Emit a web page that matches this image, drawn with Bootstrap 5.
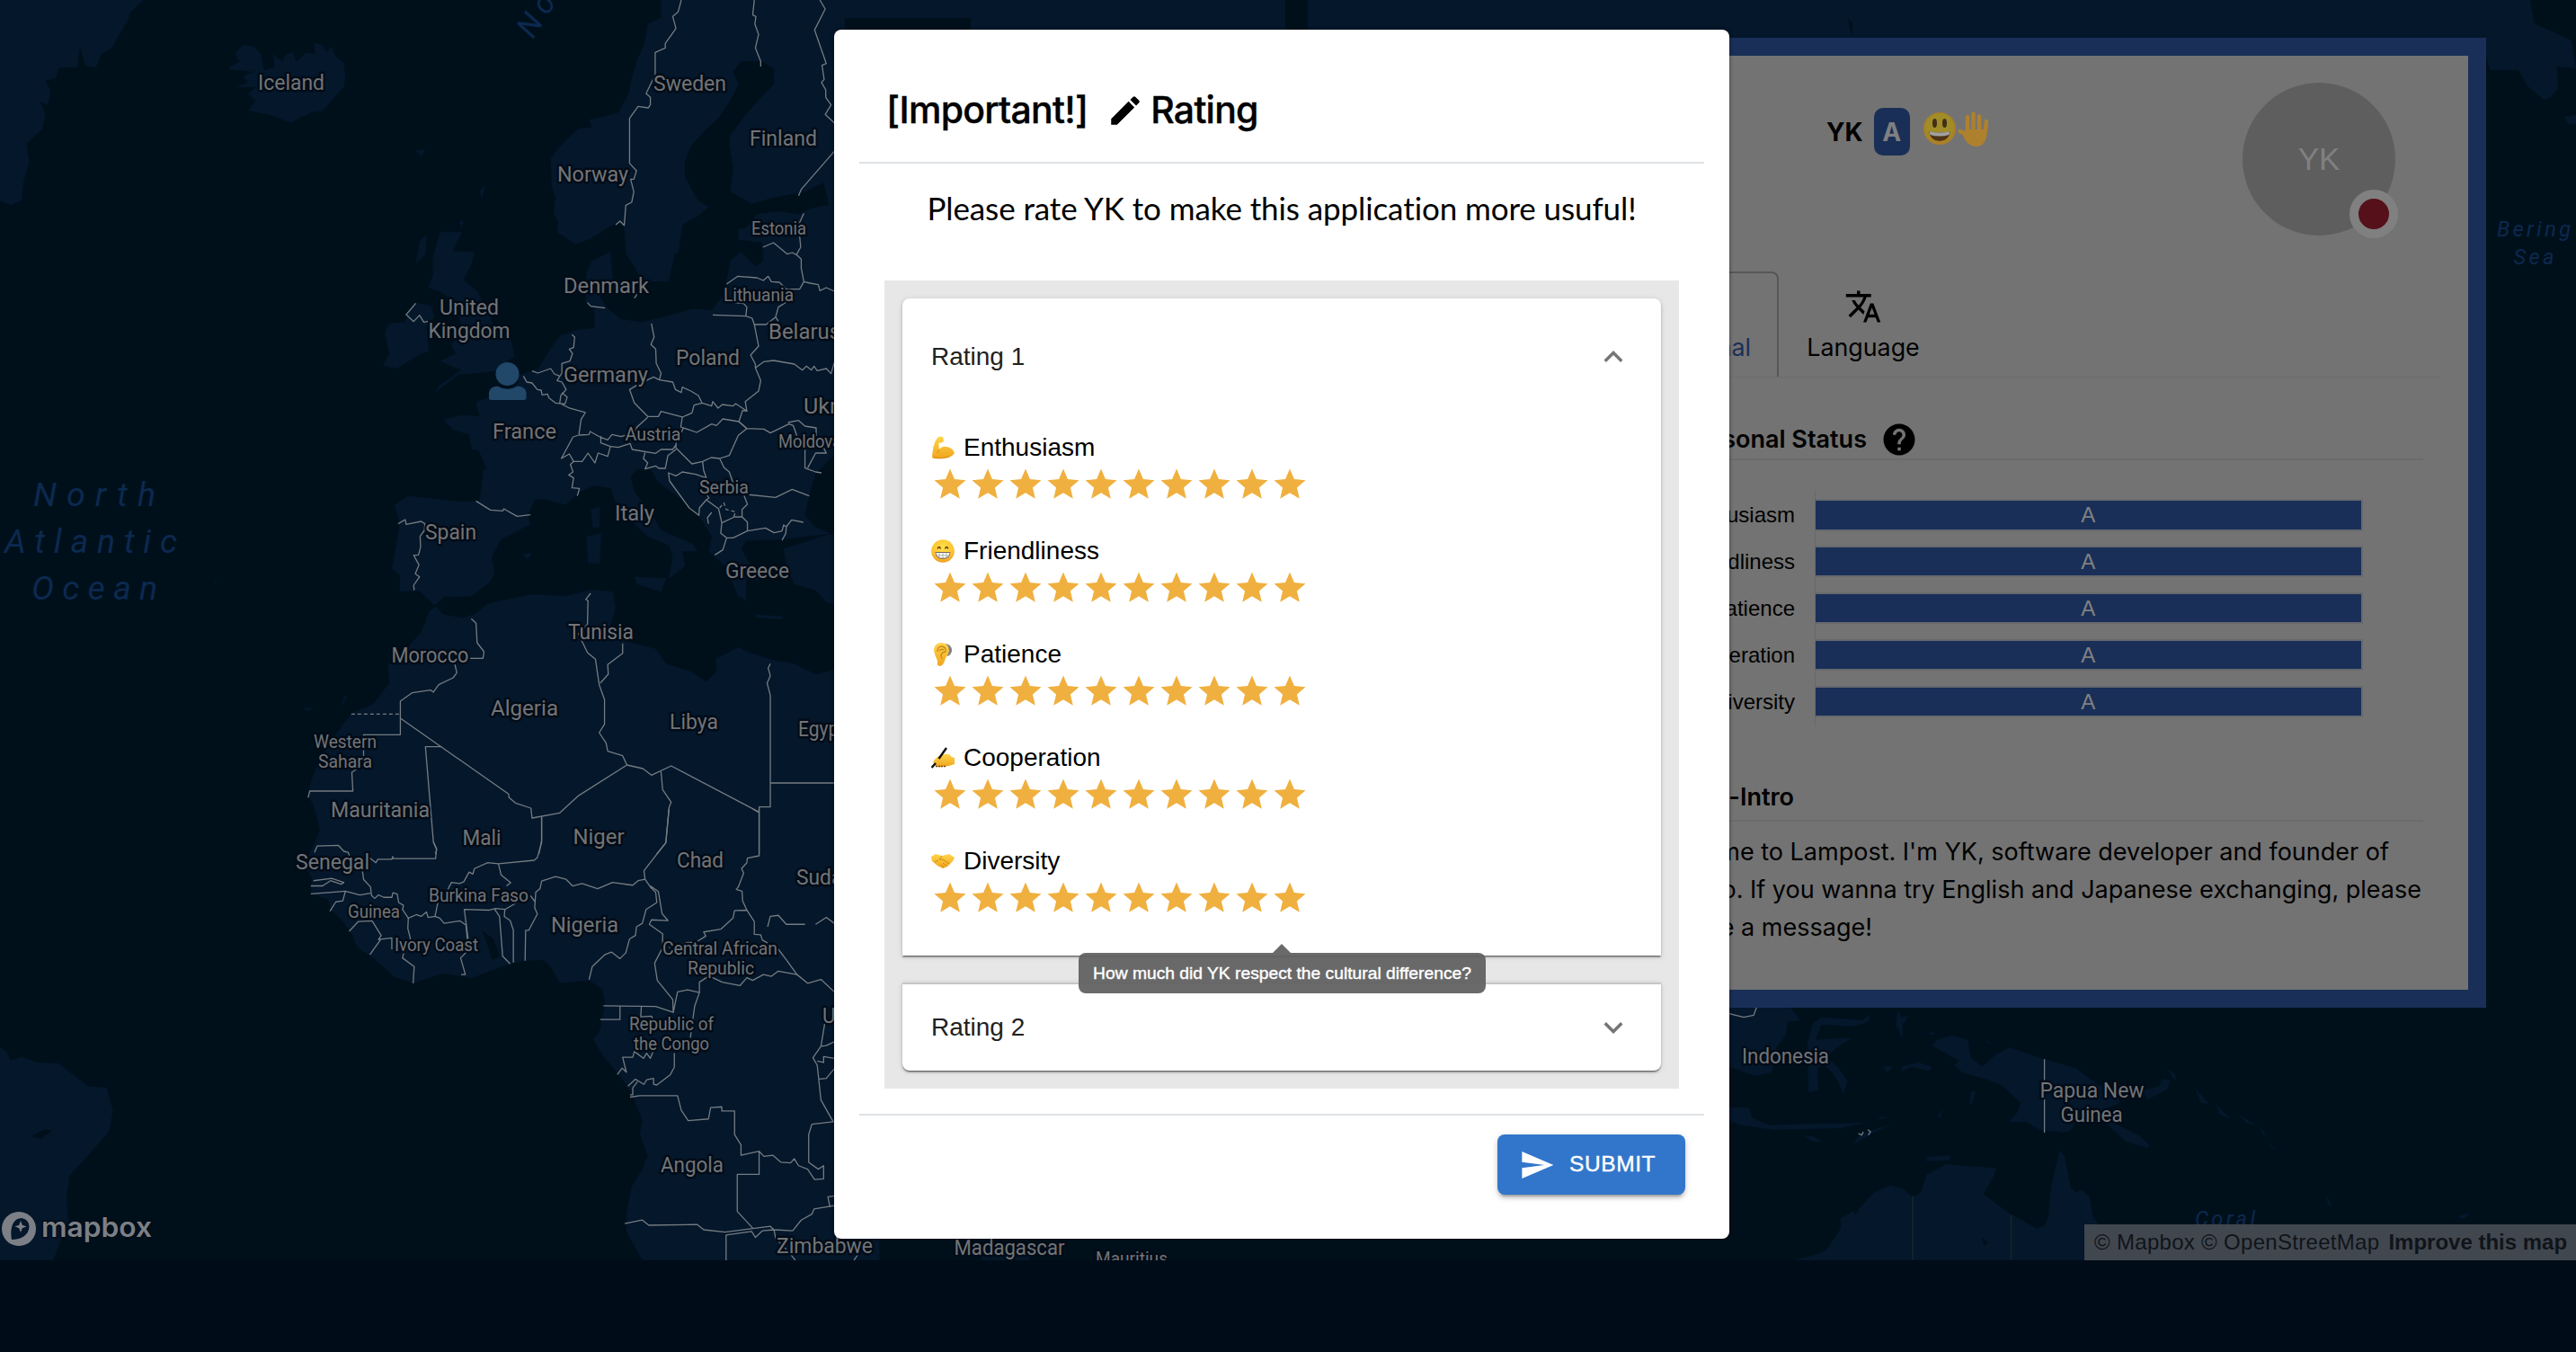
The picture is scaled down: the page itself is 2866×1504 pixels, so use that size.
<!DOCTYPE html>
<html lang="en">
<head>
<meta charset="utf-8">
<title>Lampost</title>
<link href="https://cdn.jsdelivr.net/npm/bootstrap@5.3.0/dist/css/bootstrap.min.css" rel="stylesheet">
<style>
body{background:#000c18;font-family:"Liberation Sans",Arial,sans-serif;font-size:28px;color:#000;width:2866px;height:1504px;overflow:hidden;position:relative}
svg{display:block;flex:none}
.world{height:1402px;background:#00101b;position:relative;overflow:hidden}
.world>svg.atlas{width:2866px;height:1402px}
.land{fill:#04172b}
.sea{fill:#00101b}
.border-lines path{fill:none;stroke:#757c82;stroke-width:1.3;vector-effect:non-scaling-stroke;stroke-linejoin:round}
.places text{font-family:Roboto,sans-serif;fill:#737476;stroke:#020c18;stroke-width:5px;paint-order:stroke;stroke-linejoin:round;text-anchor:middle;font-size:24px}
.places .minor{font-size:20.5px}
.waters text{font-family:Roboto,sans-serif;font-style:italic;fill:#0c2950;text-anchor:middle}
.credits{position:absolute;right:0;bottom:0;width:547px;height:40px;background:#41474f;color:#10141a;font-size:24px;line-height:40px;white-space:nowrap}
.profile{position:absolute;left:1700px;top:42px;width:1066px;height:1079px;border:20px solid #192f58;background:#737373;font-family:Inter,sans-serif;padding:0 30px 0 70px}
.grade{background:#192f58;color:#808080;width:40px;height:53px;border-radius:10px;font-weight:700}
.avatar{width:170px;height:170px;background:#5e5e5e;color:#808080;font-family:"Liberation Sans",sans-serif;font-size:35px}
.flagpin{position:absolute;right:-3px;bottom:-3px;width:54px;height:54px;border:10px solid #808080;background:#56101a;box-sizing:border-box}
.tabbar{height:118px;border-bottom:1.5px solid #6d6d6d;font-size:26.8px}
.tab-on{border:2px solid #575757;border-bottom:0;border-radius:8px 8px 0 0;color:#192f58}
.rule{border-bottom:2px solid #6c6c6c}
.chart{font-family:"Liberation Sans",sans-serif;font-size:24px;line-height:30px}
.axis{border-left:1.5px solid #696969;height:262px;padding-top:9px}
.bar{height:35.5px;margin-bottom:16.4px;background:#192f58;border:2px solid #67696d;border-left:0;color:#808080;text-align:center;line-height:32px;width:608.5px}
.barlabel{height:51.9px;line-height:35px;text-align:right}
.intro{margin-top:13px;line-height:42px;font-size:27px}
.dialogbox{position:absolute;left:928px;top:33px;width:996px;height:1345px;border-radius:8px;background:#fff;padding:0 28px;box-shadow:0 0 4px rgba(0,0,0,.5)}
.dlg-head{height:149px;border-bottom:2px solid #dee2e6;padding:64px 0 0 30px;font-family:Inter,sans-serif;font-weight:500;font-size:41px;line-height:50px;letter-spacing:-.75px;-webkit-text-stroke:.4px #000}
.dlg-lead{height:130px;font-family:Lato,sans-serif;font-size:35px;line-height:42px;letter-spacing:-.1px;padding-top:28px;text-align:center;white-space:nowrap}
.graybox{margin:0 28px;background:#e7e7e7;padding:20px}
.panel-a,.panel-b{background:#fff;box-shadow:0 2px 1px -1px rgba(0,0,0,.35),0 2px 2px rgba(0,0,0,.28),0 1px 6px rgba(0,0,0,.14);padding:0 32px}
.panel-a{height:731px;border-radius:8px 8px 0 0;margin-bottom:30px}
.panel-b{height:98px;border-radius:0 0 8px 8px;border-top:2px solid #c6c6c6}
.sum{color:#212121}
.crit{height:115px;line-height:42px}
.crit>svg{margin-top:-1px}
.crit .emo{width:26px;height:26px;margin-right:10px}
.tip{position:absolute;left:1200px;top:1060px;width:453px;height:44.5px;border-radius:8px;background:rgba(97,97,97,.94);color:#fff;font-size:19.25px;line-height:45px;text-align:center;white-space:nowrap;-webkit-text-stroke:.4px #fff}
.tip:before{content:"";position:absolute;left:216px;top:-10px;border:10px solid transparent;border-top:0;border-bottom-color:rgba(97,97,97,.94)}
.dlg-foot{margin-top:28px;border-top:2px solid #dee2e6;padding:21px 21px 0 0}
.submit{width:209px;height:67px;border-radius:8px;background:#3276cb;color:#fff;font-size:24.5px;letter-spacing:.6px;-webkit-text-stroke:.4px #fff;box-shadow:0 6px 2px -4px rgba(0,0,0,.2),0 4px 4px rgba(0,0,0,.14),0 2px 10px rgba(0,0,0,.12)}
</style>
<script src="https://cdn.jsdelivr.net/npm/bootstrap@5.3.0/dist/js/bootstrap.bundle.min.js"></script>
</head>
<body>
<svg width="0" height="0" class="position-absolute">
<defs>
<path id="star" d="M12 17.27 18.18 21l-1.64-7.03L22 9.24l-7.19-.61L12 2 9.19 8.63 2 9.24l5.46 4.73L5.82 21z"/>
<g id="stars" fill="#f0b03f"><use href="#star"/><use href="#star" x="24"/><use href="#star" x="48"/><use href="#star" x="72"/><use href="#star" x="96"/><use href="#star" x="120"/><use href="#star" x="144"/><use href="#star" x="168"/><use href="#star" x="192"/><use href="#star" x="216"/></g>
<radialGradient id="skin" cx=".5" cy=".35" r=".7"><stop offset="0" stop-color="#ffe04a"/><stop offset=".65" stop-color="#fdc431"/><stop offset="1" stop-color="#ee8f1c"/></radialGradient>
<linearGradient id="tan" x1="0" y1="0" x2="0" y2="1"><stop offset="0" stop-color="#ffd54a"/><stop offset="1" stop-color="#f0a41e"/></linearGradient>
</defs>
</svg>

<main class="world">
<svg class="atlas" viewBox="0 0 2866 1402">
<g class="land">
<g transform="scale(.5931,.33333)">
<path d="M0 0L270 0 245 40 240 70 222 120 210 160 190 180 180 225 160 220 150 160 145 225 110 225 105 260 85 270 95 300 90 350 75 340 85 380 80 430 50 480 55 540 45 600 40 670 20 685 0 670Z"/>
<path d="M430 225L450 205 440 180 455 150 475 155 490 180 495 235 515 225 512 180 530 205 537 180 550 175 556 205 575 175 590 180 590 142 605 150 612 175 622 155 630 190 645 210 648 260 645 290 620 340 605 370 585 375 545 410 510 385 465 370 480 335 465 315 480 290 440 292 465 275 455 255 475 240 430 232Z"/>
<path d="M1240 0L1240 60 1215 80 1210 140 1195 200 1185 260 1180 310 1160 375 1130 390 1105 400 1110 425 1085 430 1060 470 1045 500 1033 530 1035 620 1042 660 1038 710 1047 740 1045 775 1080 815 1110 795 1140 760 1158 745 1170 755 1175 850 1190 890 1205 940 1255 940 1265 850 1273 840 1280 750 1310 720 1330 690 1310 670 1300 640 1285 590 1285 540 1295 490 1320 440 1350 390 1375 320 1385 280 1375 240 1390 205 1430 205 1452 230 1452 280 1430 320 1400 380 1370 450 1368 480 1375 560 1370 640 1410 680 1450 660 1510 640 1545 610 1555 685 1520 695 1500 715 1460 705 1420 715 1400 760 1385 765 1385 800 1430 810 1432 870 1418 890 1390 840 1370 870 1362 950 1355 990 1335 1035 1300 1030 1240 1060 1205 1075 1165 1065 1140 1030 1125 990 1150 940 1145 840 1110 870 1100 910 1098 1010 1115 1030 1115 1095 1085 1100 1050 1120 1030 1170 1010 1230 960 1260 975 1275 945 1310 893 1340 900 1390 870 1385 835 1400 850 1435 880 1450 885 1500 1600 1500 1600 0Z"/>
<path d="M825 775L867 775 855 815 850 838 890 840 885 880 870 935 895 970 920 1060 925 1090 960 1140 965 1190 945 1215 945 1235 900 1245 860 1250 815 1312 825 1285 865 1235 825 1205 855 1180 845 1150 870 1110 850 1000 820 970 803 960 812 920 812 860Z"/>
<path d="M775 1010L808 1020 815 1060 800 1090 805 1170 780 1190 745 1230 718 1220 730 1180 722 1110 730 1080 760 1075 765 1050ZM788 800L800 785 798 850 780 880ZM780 500L798 500 790 525ZM900 635L912 615 903 662ZM862 740L870 735 866 765Z"/>
</g>
<g transform="translate(0,450) scale(.5931,.33333)">
<path d="M893 0L900 40 870 35 832 50 850 85 880 95 890 130 905 180 914 220 907 215 900 320 870 325 765 305 740 335 750 400 735 550 750 570 750 625 785 620 815 670 835 642 885 640 920 590 928 560 922 510 940 450 995 400 990 365 1005 315 1025 318 1060 335 1090 290 1115 270 1145 280 1155 330 1185 390 1215 440 1255 470 1262 510 1255 580 1285 540 1280 490 1308 490 1300 465 1240 420 1225 370 1190 290 1183 240 1195 215 1222 220 1235 260 1290 330 1310 370 1335 440 1330 490 1360 540 1385 640 1400 655 1400 580 1425 590 1390 480 1400 455 1470 450 1510 440 1560 432 1530 410 1510 370 1520 290 1530 230 1565 170 1600 150 1600 0Z"/>
<path d="M1470 480L1500 465 1550 435 1600 430 1600 680 1550 660 1530 620 1490 600 1475 540Z"/>
<path d="M1108 350L1125 340 1125 410 1112 410ZM1100 440L1128 430 1125 530 1103 530ZM1190 575L1250 580 1240 625 1195 600ZM1415 700L1470 708 1465 718 1420 712ZM980 500L998 495 990 518ZM645 975L652 972 640 1010ZM570 1010L590 1015 575 1022ZM400 588L410 590 404 594Z"/>
<path d="M818 672L830 700 868 712 890 700 915 665 950 650 1000 633 1060 640 1110 618 1150 625 1155 680 1145 740 1175 790 1230 815 1250 865 1295 890 1325 925 1345 890 1342 850 1385 810 1410 830 1455 855 1490 865 1530 900 1600 870 1600 1500 598 1500 600 1420 590 1350 578 1300 585 1250 600 1180 630 1100 660 1030 700 1000 730 930 728 870 770 800 790 760 805 690Z"/>
</g>
<g transform="translate(0,900) scale(.5931,.3852)">
<path d="M595 0L600 60 590 100 570 155 585 200 583 245 615 260 620 290 640 320 660 360 670 400 700 430 740 485 775 503 830 475 885 488 955 448 985 438 1020 436 1035 460 1050 503 1105 495 1130 520 1135 560 1125 640 1112 665 1130 710 1160 765 1185 820 1205 900 1200 940 1215 1000 1205 1040 1185 1090 1175 1170 1175 1220 1205 1303 1650 1303 1650 1245 1690 1180 1690 0Z"/>
<path d="M0 688L12 700 20 725 40 715 70 732 110 735 165 800 200 805 212 870 205 930 160 1010 130 1060 125 1120 128 1190 100 1303 0 1303Z"/>
</g>
<path d="M928 0H2815L2824 50 2750 60H928ZM1092 1402L1092 1396H1145L1145 1402Z"/>
<path d="M2766 60L2760 35 2806 20 2815 24 2824 28 2861 45 2866 76 2845 74 2846 99 2838 108 2830 111 2812 96 2802 78 2770 78ZM2852 130L2866 128 2866 138 2858 138Z"/>
<g transform="translate(1900,1060) scale(.6161,.33333)">
<path d="M39 183L150 183 168 225 145 230 140 280 125 310 115 400 85 410 39 380Z"/>
<path d="M190 235L205 215 280 225 293 203 290 230 265 245 205 240 195 290 235 285 260 285 230 320 215 350 235 380 253 430 245 470 235 430 225 400 210 370 198 385 200 460 182 465 180 300Z"/>
<path d="M343 190L350 215 362 210 352 240 352 285 340 240ZM398 265L412 268 405 275ZM315 380L335 378 325 398ZM350 380L380 365 405 380 400 395 370 380 350 395ZM475 465L484 460 478 505 472 500ZM415 545L425 520 420 550ZM500 290L512 300 508 305Z"/>
<path d="M405 310L415 290 440 275 470 290 475 350 495 380 520 340 545 315 600 350 665 385 705 440 735 460 745 500 720 520 735 570 780 610 797 640 795 652 755 630 720 570 690 530 665 560 655 595 640 600 600 590 575 565 543 565 560 530 565 500 530 440 500 420 460 400 445 375 455 360 430 335Z"/>
<path d="M155 1025L190 1010 215 990 240 920 240 885 265 860 265 875 280 840 300 800 330 775 355 790 370 815 385 800 395 740 430 705 460 710 500 715 522 720 515 750 498 805 545 870 595 920 608 910 615 880 620 780 635 660 645 680 655 780 665 800 675 790 690 815 695 880 720 940 765 1025Z"/>
<path d="M39 515L75 515 80 550 110 575 190 570 245 570 290 565 240 585 180 588 120 590 60 575 39 560ZM172 610L190 612 208 632 190 630ZM262 640L275 605 335 570 300 600ZM305 550L325 545 315 555ZM785 460L815 445 820 420 835 425 830 455 795 490ZM793 350L845 405 845 430 830 390ZM880 450L905 505 890 500ZM918 508L945 555 925 540ZM958 540L990 575 975 570ZM995 575L1012 615 1003 605ZM1012 635L1028 655 1018 652ZM1117 810L1128 845 1120 840ZM1130 850L1140 872ZM1355 880L1378 865 1365 890ZM395 682L440 675 435 692 395 695Z"/>
</g>
</g>
<g class="sea"><path d="M940 20H1080V33H940ZM1430 0H1455V33H1430ZM2056 20L2061 26 2060 41Z"/>
<path d="M2204 1376L2212 1382 2208 1386ZM35 1264L50 1256 58 1258 45 1267ZM537 1036L549 1044 556 1064 548 1068Z"/></g>

<g class="border-lines">
<g transform="scale(.5931,.33333)">
<path d="M1278 0L1272 40 1262 55 1268 95 1248 145 1248 160 1229 175 1229 250 1212 312 1220 325 1220 350 1216 360 1197 355 1181 395 1181 545 1194 570 1189 598 1183 598 1189 640 1185 675 1174 685 1171 752 1163 738 1155 750M1415 0L1412 50 1418 55 1416 80 1423 115 1417 160 1427 205 1427 222M1538 0L1548 30 1528 100 1550 212 1542 218 1546 265 1541 275 1549 300 1549 325 1559 350 1548 382 1565 410M1565 505L1503 632 1498 653"/>
<path d="M1508 712L1498 750 1502 825 1494 850 1503 865 1503 895 1508 940 1520 945 1535 950 1538 970 1550 960 1565 972M1431 825L1451 810 1477 848 1486 843 1494 850M1363 948L1384 922 1420 927 1432 936 1441 922 1447 940 1462 942 1475 965 1500 965 1508 940M1378 1010L1395 1013 1401 1025 1399 1055M1337 1051L1399 1055 1411 1062 1415 1083 1437 1083 1455 1058 1460 1072M1455 1058L1460 1025 1478 1005"/>
<path d="M1415 1083L1423 1155 1408 1185 1417 1215 1417 1228 1427 1270 1423 1305 1398 1340 1401 1372M1417 1228L1433 1207 1451 1203 1490 1215 1505 1235 1513 1222 1522 1235 1527 1222 1533 1237 1550 1230 1559 1247 1565 1210"/>
<path d="M1222 1080L1227 1125 1221 1150 1230 1165 1231 1213 1240 1245 1237 1268 1226 1258 1195 1285 1181 1300 1190 1345 1215 1390 1235 1390 1240 1373 1280 1392 1298 1378 1302 1352 1317 1345 1310 1320 1296 1305 1280 1292 1278 1310 1267 1300 1262 1275 1237 1268M1317 1345L1335 1355 1337 1340 1347 1362 1355 1350 1375 1355 1380 1347 1401 1372 1393 1370 1386 1407 1401 1430"/>
<path d="M1073 1117L1078 1125 1076 1160 1068 1165 1074 1180 1069 1205 1054 1213 1054 1245 1045 1270 1054 1275 1062 1300 1052 1320 1050 1345 1068 1362 1098 1377 1090 1400 1086 1450M998 1238L1009 1245 1033 1230 1040 1248 1050 1255M1054 1310L1064 1325 1060 1348M982 1255L988 1275 998 1278 1008 1300 1015 1302 1017 1318 1027 1315 1030 1328 1042 1345 1060 1348M1102 1010L1108 1022 1135 1028M1188 950L1194 985 1190 995M780 1012L762 1050 776 1073 787 1052 795 1075 803 1073"/>
</g>
<g transform="translate(0,450) scale(.5931,.33333)">
<path d="M1086 102L1105 100 1107 90 1125 108 1140 118 1148 100 1165 107 1190 95 1195 75 1215 43M1086 102L1075 108 1053 180 1068 165 1076 190 1092 190 1103 162 1116 195 1122 162 1140 173 1145 140 1127 128 1127 105M1145 140L1160 143 1182 130 1186 150 1230 163 1240 150 1262 150 1268 135M1076 190L1070 200 1075 225 1067 235 1076 245 1073 278 1087 280 1083 305M893 322L920 352 943 355 945 348 970 373 995 368M747 398L760 384 762 400 790 390 797 398 796 420 788 440 789 475 785 502 776 503 786 535 779 565 787 575 776 603 777 620"/>
<path d="M1280 42L1277 75 1307 93 1335 65 1344 70 1356 48 1386 57 1401 80 1385 103 1368 170 1350 180 1334 177 1318 190 1298 198 1268 145 1268 130 1282 78M1210 160L1207 180 1215 195 1210 215 1230 205 1236 213 1248 213 1253 170 1268 150M1401 80L1433 82 1445 95 1480 65 1488 70 1495 105M1478 60L1498 53 1510 72 1531 78 1531 105M1510 145L1510 212 1530 225 1541 228M1515 212L1530 162 1550 162 1545 145"/>
<path d="M1318 190L1320 220 1325 245 1305 233 1280 225 1268 238 1254 228 1256 255 1293 345 1311 370 1312 345 1325 318 1330 312 1320 285M1350 180L1358 210 1368 225 1375 260 1400 300 1455 310 1486 283 1518 305M1395 300L1402 333 1392 350 1392 375 1378 375 1354 395 1352 430 1363 445 1375 445 1402 422 1402 392 1392 375M1325 318L1348 348 1354 395M1402 422L1436 412 1452 428 1467 422 1470 402 1475 408 1485 385 1507 393M1363 445L1356 485 1341 502M1335 360L1327 378 1329 398M1475 408L1474 430 1467 453"/>
<path d="M884 715L893 730 895 795 908 825 906 847 882 847M853 865L857 895 850 912 823 935 813 960 808 953 773 962 751 990 751 1102 682 1102 682 1200 660 1228 662 1290 581 1290 578 1312M751 1047L954 1300 955 1312 967 1330 996 1347 998 1380 1050 1363 1084 1307 1176 1203 1168 1172 1140 1157 1137 1130 1124 1095 1134 1067 1134 985 1124 935 1117 850 1102 828 1085 765 1102 733 1103 655 1099 650 1108 630M1168 797L1168 830 1140 868 1141 900 1126 930"/>
<path stroke-dasharray="4 3" d="M659 1033L751 1033M1350 345L1358 328 1362 350 1380 358 1375 380"/>
<path d="M829 1142L798 1142 813 1460 819 1485 817 1500M1016 1378L1016 1455 1011 1500M1176 1203L1206 1215 1222 1237 1259 1206 1424 1360M1240 1225L1243 1285 1259 1327 1255 1345 1249 1463 1232 1500M1445 865L1441 880 1445 905 1439 930 1445 970 1445 1343 1424 1343 1424 1500M1445 1263L1565 1263"/>
</g>
<g transform="translate(0,900) scale(.5931,.3852)">
<path d="M1016 22L1016 97 1008 140 1002 148 935 158 915 155 890 172 887 188 880 182 870 210 862 215 847 212 840 232M822 265L816 310 825 315 833 330 863 323 874 335 877 380M935 158L940 190 958 213 950 222M995 250L1004 268M590 125L595 107 635 105 645 122 653 125 657 140M693 140L705 155 709 145 735 145 737 137 737 143 817 143 819 115 813 95M680 180L682 203 695 225 697 250 703 258 710 248 720 255 735 255 737 242 745 245 748 270 757 278 755 290 766 315 781 305 790 310 800 297 803 313 816 310"/>
<path d="M588 207L622 200 645 212 640 217 620 207 605 222 583 222M583 245L648 237 675 248 695 243M648 237L643 265 630 268 619 295M655 353L672 325 698 323 715 365 710 377 735 372 735 405M715 375L694 420M766 315L765 345 770 375 760 400 755 430 777 455 775 503M877 410L864 430 873 478 865 478M878 375L871 290 918 292 930 287 947 290 970 270M928 290L937 310 943 425 957 447M947 290L946 310 957 322 963 350 963 443"/>
<path d="M985 438L986 350 992 350 1008 303 1003 285 1005 240 1013 230 1016 208 1042 195 1062 203 1074 222 1092 215 1121 230 1149 212 1187 220 1197 207 1210 203 1208 178 1249 97 1255 0M1210 203L1220 225 1230 240 1232 270 1212 290 1205 330 1194 340 1192 365 1181 375 1174 415 1163 432 1147 413 1135 420 1111 455 1105 493M1220 222L1235 238 1242 302 1253 322 1222 320 1218 333 1243 360 1243 400 1228 445 1233 495 1262 550 1263 587 1230 570 1132 568M1263 587L1271 528 1290 522 1312 530 1312 500 1330 482 1355 500 1388 510 1401 487 1412 495 1432 478 1447 483 1460 468 1495 478 1475 435 1460 405 1430 378 1427 363 1415 362 1415 325 1401 292 1378 293 1375 315 1352 347 1320 355 1324 367 1305 385 1290 385 1255 400"/>
<path d="M1412 0L1424 10M1424 0L1424 135 1402 142 1401 155 1391 172 1395 185 1385 225 1381 232 1392 237 1393 265 1401 292M1440 340L1445 310 1460 307 1475 333 1510 333M1530 333L1550 313 1565 330M1495 478L1515 503 1540 492 1565 528M1163 570L1163 608 1126 608M1203 570L1202 600 1222 598 1226 610M1312 530L1303 570 1295 660M1265 705L1265 745 1257 768 1232 797 1226 795 1226 778 1213 782 1208 795 1192 780 1178 800M1196 787L1187 805 1187 825 1182 825M1228 690L1220 720 1213 705 1207 720 1190 700 1187 717 1168 717 1175 760 1167 748 1158 767"/>
<path d="M1182 832L1200 828 1271 828 1278 870 1291 900 1329 895 1333 862 1354 860 1354 872 1378 872 1378 940 1390 970 1390 1000 1424 988 1424 1055 1383 1055 1383 1162 1412 1210M1424 988L1433 1003 1450 1000 1465 1020 1483 1022 1490 1010 1498 1030 1515 1040 1528 1070 1545 1068 1545 1030 1535 1040 1517 1020 1517 940 1523 910 1563 903 1540 840 1533 740 1525 718 1540 685 1547 620M1540 685L1550 683 1565 672M1533 728L1545 732 1545 715 1565 720M1537 780L1550 778 1565 750M1565 1117L1553 1120 1557 1150"/>
<path d="M1172 1197L1205 1187 1217 1202 1308 1200 1320 1215 1360 1222 1445 1205 1452 1215 1487 1218 1503 1187 1523 1170 1527 1155 1565 1145M1362 1303L1362 1230 1410 1220 1417 1237 1430 1218 1452 1215 1455 1240 1480 1280 1492 1303M1602 1303L1610 1285"/>
</g>
<g transform="translate(1900,1060) scale(.6161,.33333)"><path d="M39 203L65 215 83 208 88 183M608 355L608 600M272 603L278 608 281 597M289 590L294 597 290 608"/><path style="stroke:#10242c;stroke-width:2" d="M370 812L370 1025M548 875L548 1025"/></g>
</g>

<g class="places">
<text x="324" y="100" textLength="74" lengthAdjust="spacingAndGlyphs">Iceland</text>
<text x="767.5" y="101" textLength="81" lengthAdjust="spacingAndGlyphs">Sweden</text>
<text x="871.5" y="162" textLength="75" lengthAdjust="spacingAndGlyphs">Finland</text>
<text x="659.5" y="202" textLength="79" lengthAdjust="spacingAndGlyphs">Norway</text>
<text class="minor" x="866.5" y="261" textLength="61" lengthAdjust="spacingAndGlyphs">Estonia</text>
<text x="674.5" y="326" textLength="95" lengthAdjust="spacingAndGlyphs">Denmark</text>
<text class="minor" x="844" y="335" textLength="78" lengthAdjust="spacingAndGlyphs">Lithuania</text>
<text x="522" y="349.500" textLength="66" lengthAdjust="spacingAndGlyphs">United</text>
<text x="522" y="376" textLength="91" lengthAdjust="spacingAndGlyphs">Kingdom</text>
<text x="895" y="377" textLength="80" lengthAdjust="spacingAndGlyphs">Belarus</text>
<text x="787.5" y="406" textLength="71" lengthAdjust="spacingAndGlyphs">Poland</text>
<text x="674" y="425" textLength="94" lengthAdjust="spacingAndGlyphs">Germany</text>
<text x="936" y="460" textLength="84" lengthAdjust="spacingAndGlyphs">Ukraine</text>
<text x="583.5" y="488" textLength="71" lengthAdjust="spacingAndGlyphs">France</text>
<text class="minor" x="726.5" y="490" textLength="62" lengthAdjust="spacingAndGlyphs">Austria</text>
<text class="minor" x="901" y="497.500" textLength="70" lengthAdjust="spacingAndGlyphs">Moldova</text>
<text x="706" y="579" textLength="44" lengthAdjust="spacingAndGlyphs">Italy</text>
<text class="minor" x="805.5" y="549" textLength="55" lengthAdjust="spacingAndGlyphs">Serbia</text>
<text x="501.5" y="600" textLength="57" lengthAdjust="spacingAndGlyphs">Spain</text>
<text x="842.5" y="643" textLength="71" lengthAdjust="spacingAndGlyphs">Greece</text>
<text x="668.5" y="711" textLength="73" lengthAdjust="spacingAndGlyphs">Tunisia</text>
<text x="478.5" y="737" textLength="86" lengthAdjust="spacingAndGlyphs">Morocco</text>
<text x="583.5" y="796" textLength="75" lengthAdjust="spacingAndGlyphs">Algeria</text>
<text x="772" y="811" textLength="54" lengthAdjust="spacingAndGlyphs">Libya</text>
<text x="914" y="819" textLength="52" lengthAdjust="spacingAndGlyphs">Egypt</text>
<text class="minor" x="384" y="832" textLength="70" lengthAdjust="spacingAndGlyphs">Western</text>
<text class="minor" x="384" y="854" textLength="60" lengthAdjust="spacingAndGlyphs">Sahara</text>
<text x="423" y="909" textLength="110" lengthAdjust="spacingAndGlyphs">Mauritania</text>
<text x="536" y="940" textLength="43" lengthAdjust="spacingAndGlyphs">Mali</text>
<text x="666" y="939" textLength="57" lengthAdjust="spacingAndGlyphs">Niger</text>
<text x="779" y="965" textLength="52" lengthAdjust="spacingAndGlyphs">Chad</text>
<text x="370" y="967" textLength="82" lengthAdjust="spacingAndGlyphs">Senegal</text>
<text x="918" y="984" textLength="64" lengthAdjust="spacingAndGlyphs">Sudan</text>
<text class="minor" x="532.5" y="1003" textLength="111" lengthAdjust="spacingAndGlyphs">Burkina Faso</text>
<text class="minor" x="416" y="1021" textLength="58" lengthAdjust="spacingAndGlyphs">Guinea</text>
<text x="650.5" y="1037" textLength="75" lengthAdjust="spacingAndGlyphs">Nigeria</text>
<text class="minor" x="485.500" y="1058" textLength="93" lengthAdjust="spacingAndGlyphs">Ivory Coast</text>
<text class="minor" x="801" y="1062" textLength="128" lengthAdjust="spacingAndGlyphs">Central African</text>
<text class="minor" x="802" y="1084" textLength="74" lengthAdjust="spacingAndGlyphs">Republic</text>
<text x="953" y="1138" textLength="76" lengthAdjust="spacingAndGlyphs">Uganda</text>
<text class="minor" x="747" y="1146" textLength="94" lengthAdjust="spacingAndGlyphs">Republic of</text>
<text class="minor" x="747" y="1168" textLength="84" lengthAdjust="spacingAndGlyphs">the Congo</text>
<text x="770" y="1304" textLength="70" lengthAdjust="spacingAndGlyphs">Angola</text>
<text x="917.5" y="1394" textLength="107" lengthAdjust="spacingAndGlyphs">Zimbabwe</text>
<text x="1123" y="1396" textLength="123" lengthAdjust="spacingAndGlyphs">Madagascar</text>
<text class="minor" x="1259" y="1407" textLength="80" lengthAdjust="spacingAndGlyphs">Mauritius</text>
<text x="1986.500" y="1183" textLength="97" lengthAdjust="spacingAndGlyphs">Indonesia</text>
<text x="2327.500" y="1221" textLength="116" lengthAdjust="spacingAndGlyphs">Papua New</text>
<text x="2327" y="1247.500" textLength="69" lengthAdjust="spacingAndGlyphs">Guinea</text>
</g>
<g class="waters">
<text x="105" y="563" font-size="37.500" textLength="136">North</text>
<text x="101" y="615" font-size="37.500" textLength="192">Atlantic</text>
<text x="105" y="667" font-size="37.500" textLength="140">Ocean</text>
<text x="0" y="0" font-size="34" letter-spacing="7" transform="translate(608 20) rotate(-58)">No</text>
<text x="2819" y="263" font-size="23.500" textLength="82">Bering</text>
<text x="2819" y="294" font-size="23.500" textLength="45">Sea</text>
<text x="2475.500" y="1364" font-size="23.500" textLength="67">Coral</text>
</g>
<g fill="#214869" transform="translate(544,403)"><ellipse cx="20.500" cy="13" rx="13" ry="13"/><path d="M0 40V34Q1 27 9 26.500 Q21 33 32 26.500Q41 27 41.500 34V40Q41 42 39 42H3Q0 42 0 40Z"/></g>
<g fill="#7c8086"><path fill-rule="evenodd" d="M21 1348a19 19 0 1 0 .01 0ZM13 1379C11 1369 13 1355 24 1355a9.500 9.500 0 0 1 8.500 9.500C32 1375 22 1379 13 1379Z"/><path d="M23 1358l1.800 4.800 4.700 1.700-4.700 1.700-1.800 4.800-1.800-4.800-4.700-1.700 4.700-1.700z"/>
<text x="46" y="1376" font-family="Inter" font-weight="600" font-size="30" textLength="123" lengthAdjust="spacingAndGlyphs" stroke="#020c18" stroke-width="3" paint-order="stroke">mapbox</text></g>
</svg>
<div class="credits d-flex"><span style="margin-left:11px;letter-spacing:.3px">© Mapbox © OpenStreetMap</span><b style="margin-left:10px">Improve this map</b></div>
</main>

<section class="profile d-flex flex-column">
<div class="d-flex" style="height:240px">
<div class="d-flex align-items-start" style="margin:58px 0 0 242px">
<span class="fw-bold" style="line-height:55px">YK</span>
<span class="grade d-flex align-items-center justify-content-center" style="margin:0 14px 0 12px">A</span>
<svg width="76" height="42" viewBox="0 0 76 42" style="margin-top:3px"><g opacity=".85" fill="#b5831a"><circle cx="19" cy="20" r="18"/><circle cx="19" cy="18.500" r="15.500" fill="#a8921c"/><ellipse cx="13.500" cy="14" rx="2.500" ry="5" fill="#3a2208"/><ellipse cx="24.500" cy="14" rx="2.500" ry="5" fill="#3a2208"/><path d="M7 23Q19 26 31 23 29 34 19 34 9 34 7 23Z" fill="#4a2a08"/><path d="M7.500 23Q19 26 30.500 23L29.500 27Q19 30 8.500 27Z" fill="#aaa"/></g>
<g fill="none" stroke="#ae812f" stroke-linecap="round" stroke-width="4.500"><path d="M50 22V7M56.500 20V3.500M63 22V6.500M69.500 25L71 12M41.500 23Q46 24 50 30"/><path d="M48 22H71Q70 39 60 39 52 39 47 30Z" fill="#ae812f" stroke-width="2"/></g></svg>
</div>
<div class="avatar rounded-circle position-relative d-flex align-items-center justify-content-center ms-auto" style="margin:30px 51px 0 0">YK<span class="flagpin rounded-circle"></span></div>
</div>
<div class="tabbar d-flex">
<div class="tab-on text-end" style="width:189px;padding:64px 29px 0 0;line-height:36px">Personal</div>
<div class="text-center" style="width:188px;padding-top:18px;line-height:36px"><svg class="mx-auto" width="42" height="42" viewBox="0 0 24 24" style="margin-bottom:6px"><path d="m12.870 15.070-2.540-2.510.03-.03c1.740-1.940 2.980-4.170 3.710-6.530H17V4h-7V2H8v2H1v1.990h11.170C11.500 7.920 10.440 9.750 9 11.350 8.070 10.320 7.300 9.190 6.690 8h-2c.73 1.630 1.730 3.170 2.980 4.560l-5.090 5.020L4 19l5-5 3.110 3.110zM18.500 10h-2L12 22h2l1.120-3h4.750L21 22h2zm-2.620 7 1.620-4.330L19.120 17z"/></svg>Language</div>
</div>
<div class="rule d-flex align-items-center" style="height:92px;padding:47px 0 0 0;margin-right:20px;line-height:36px"><span class="text-end fw-semibold" style="width:287px;font-size:27px">Personal Status</span><svg width="42" height="42" viewBox="0 0 24 24" style="margin-left:15px"><path d="M12 2C6.480 2 2 6.480 2 12s4.480 10 10 10 10-4.480 10-10S17.520 2 12 2m1 17h-2v-2h2zm2.070-7.750-.9.920C13.450 12.900 13 13.500 13 15h-2v-.5c0-1.100.45-2.100 1.170-2.830l1.240-1.260c.37-.36.59-.86.59-1.410 0-1.100-.9-2-2-2s-2 .9-2 2H8c0-2.210 1.790-4 4-4s4 1.790 4 4c0 .88-.36 1.680-.93 2.250"/></svg></div>
<div class="chart d-flex" style="margin-top:34px">
<div style="width:229px;padding-top:9px;padding-right:22px"><div class="barlabel">Enthusiasm</div><div class="barlabel">Friendliness</div><div class="barlabel">Patience</div><div class="barlabel">Cooperation</div><div class="barlabel">Diversity</div></div>
<div class="axis"><div class="bar">A</div><div class="bar">A</div><div class="bar">A</div><div class="bar">A</div><div class="bar">A</div></div>
</div>
<div class="rule" style="margin:54px 20px 0 0;height:46px;line-height:36px"><span class="d-inline-block text-end fw-semibold" style="width:206px;font-size:27px">Self-Intro</span></div>
<div class="intro text-nowrap"><div><span class="d-inline-block text-end" style="width:868px">Welcome to Lampost. I'm YK, software developer and founder of</span></div><div><span class="d-inline-block text-end" style="width:904px">Lampo. If you wanna try English and Japanese exchanging, please</span></div><div><span class="d-inline-block text-end" style="width:293px">give me a message!</span></div></div>
</section>

<section class="dialogbox">
<div class="dlg-head d-flex align-items-start"><span>[Important!]</span><svg width="42" height="42" viewBox="0 0 24 24" style="margin:5px 7px 0 21px"><path d="M3 17.250V21h3.750L17.810 9.940l-3.750-3.750zM20.710 7.040c.39-.39.39-1.020 0-1.410l-2.340-2.340a.996.996 0 0 0-1.410 0l-1.830 1.830 3.750 3.750z"/></svg><span>Rating</span></div>
<div class="dlg-lead">Please rate YK to make this application more usuful!</div>
<div class="graybox">
<div class="panel-a">
<div class="sum d-flex align-items-center justify-content-between" style="height:129px"><span>Rating 1</span><svg width="42" height="42" viewBox="0 0 24 24"><path fill="#757575" d="m12 8-6 6 1.410 1.410L12 10.830l4.590 4.580L18 14z"/></svg></div>
<div style="padding-top:16px">
<div class="crit"><div class="d-flex align-items-center"><svg class="emo" viewBox="0 0 26 26"><path d="M7 2Q9 0 13 1L14 6 11 8 9 7Q8 10 9 15 12 11 17 12 24 13 26 19 22 25 12 25 3 26 1 24 2 8 7 2Z" fill="url(#tan)"/><path d="M9 15Q8 18 6 19M3 24Q12 26 20 23" fill="none" stroke="#d98c12"/></svg>Enthusiasm</div><svg width="420" height="42" viewBox="0 0 240 24"><use href="#stars"/></svg></div>
<div class="crit"><div class="d-flex align-items-center"><svg class="emo" viewBox="0 0 26 26"><circle cx="13" cy="13" r="12.800" fill="url(#skin)"/><path d="M7 10.500Q9 6.500 10.500 10.500M15.500 10.500Q17 6.500 19 10.500" fill="none" stroke="#5c3a0c" stroke-width="1.300"/><path d="M4.500 14H21.500Q21 22 13 22 5 22 4.500 14Z" fill="#7a6a58"/><path d="M5.500 15H20.500Q20 20.800 13 20.800 6 20.800 5.500 15Z" fill="#fff"/><path d="M5.500 17.800H20.500M9 15V20M13 15V21M17 15V20" stroke="#999" stroke-width=".7"/></svg>Friendliness</div><svg width="420" height="42" viewBox="0 0 240 24"><use href="#stars"/></svg></div>
<div class="crit"><div class="d-flex align-items-center"><svg class="emo" viewBox="0 0 26 26"><path d="M14 1Q23 1 23 9 22 14 18 15Z" fill="#7d7f83"/><path d="M3 9Q3 0 12 0 20 1 20 9 19 14 16 17 14 26 9 26 6 25 7 20 4 14 3 9Z" fill="url(#tan)"/><path d="M7 10Q7 4 12 4 17 5 16 10 12 10 11 14L12 18M9 9Q12 6 14 8" fill="none" stroke="#c88a20" stroke-width="1.300"/></svg>Patience</div><svg width="420" height="42" viewBox="0 0 240 24"><use href="#stars"/></svg></div>
<div class="crit"><div class="d-flex align-items-center"><svg class="emo" viewBox="0 0 26 26"><path d="M2 18Q6 11 11 10L14 9 20 9Q22 12 26 13V20Q18 23 12 23 4 24 4 20Z" fill="url(#tan)"/><path d="M5 22.500H16" stroke="#7a4210" stroke-width="1.500" stroke-dasharray="2 1"/><path d="M.500 24L5 19M8.500 14L17 2" stroke="#111" stroke-width="2.400"/></svg>Cooperation</div><svg width="420" height="42" viewBox="0 0 240 24"><use href="#stars"/></svg></div>
<div class="crit"><div class="d-flex align-items-center"><svg class="emo" viewBox="0 0 26 26"><path d="M0 8L5 5 12 7 20 5 26 9 24 13 18 19 13 21 7 18 1 13Z" fill="url(#tan)"/><path d="M12 7L9 11 13 11 20 16M4 14L8 12M13 15L17 18M11 17L14 20" fill="none" stroke="#cf8a14" stroke-width="1"/></svg>Diversity</div><svg width="420" height="42" viewBox="0 0 240 24"><use href="#stars"/></svg></div>
</div>
</div>
<div class="panel-b sum d-flex align-items-center justify-content-between"><span>Rating 2</span><svg width="42" height="42" viewBox="0 0 24 24"><path fill="#757575" d="M16.590 8.590 12 13.170 7.410 8.590 6 10l6 6 6-6z"/></svg></div>
</div>
<div class="dlg-foot d-flex justify-content-end"><button class="btn submit d-flex align-items-center border-0 p-0"><svg width="40" height="40" viewBox="0 0 24 24" style="margin:0 16px 0 24px"><path fill="#fff" d="M2.010 21 23 12 2.010 3 2 10l15 2-15 2z"/></svg>SUBMIT</button></div>
</section>
<div class="tip">How much did YK respect the cultural difference?</div>
</body>
</html>
